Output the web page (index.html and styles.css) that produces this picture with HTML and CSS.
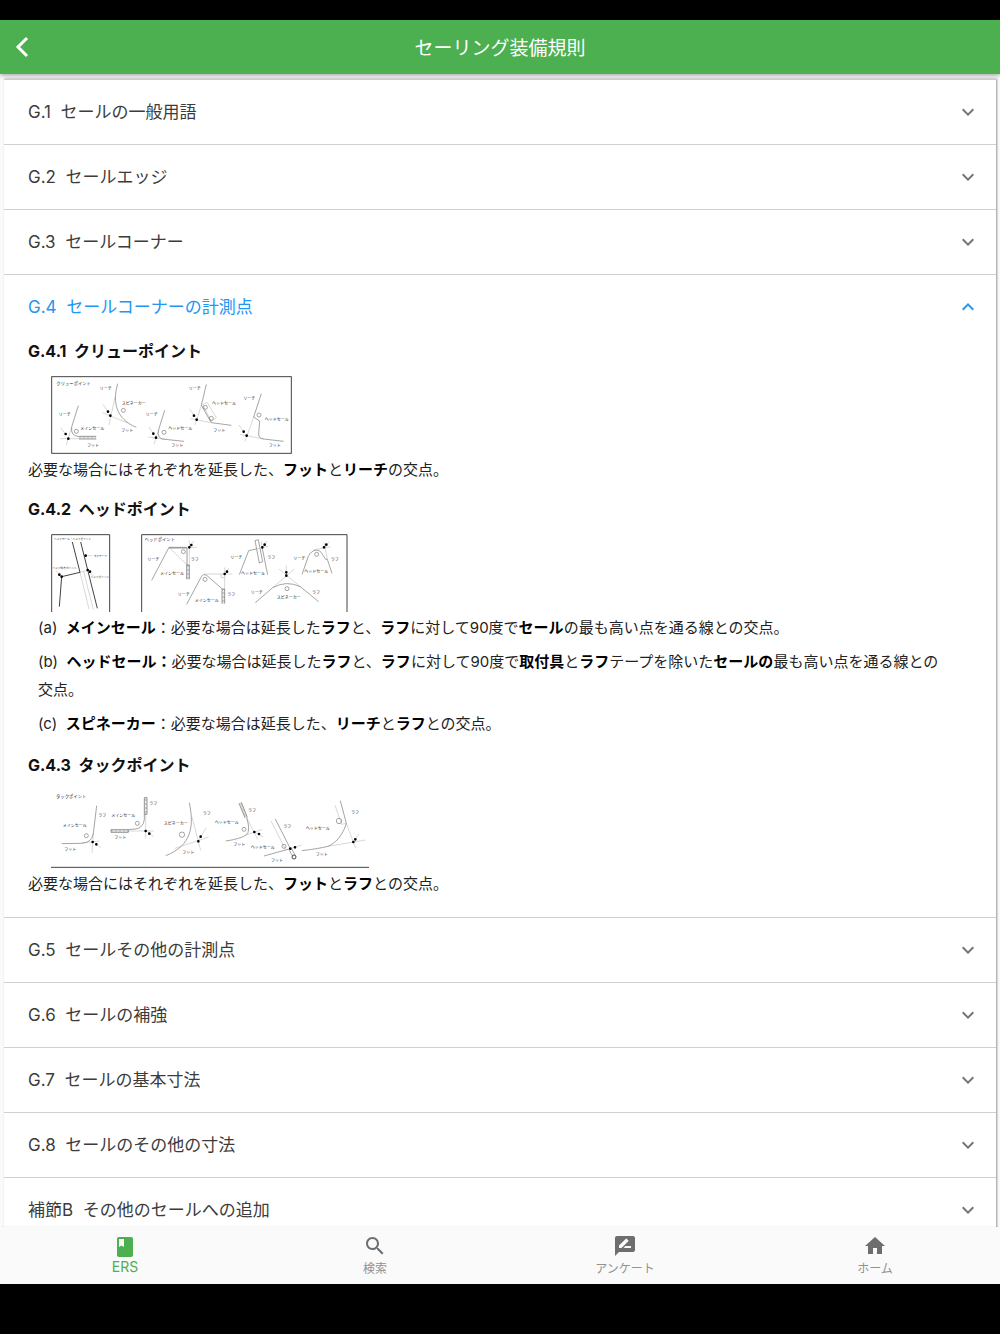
FILE: index.html
```html
<!DOCTYPE html>
<html lang="ja">
<head>
    <meta charset="UTF-8">
    <meta name="viewport" content="width=device-width, initial-scale=1.0">
    <title>セーリング装備規則</title>
    <link rel="stylesheet" href="styles.css">
</head>
<body>

    <header class="app-bar">
        <button class="back" type="button" aria-label="戻る">
            <svg width="14" height="22" viewBox="0 0 14 22"><path d="M12 2L3 11L12 20" fill="none" stroke="currentColor" stroke-width="3"/></svg>
        </button>
        <h1>セーリング装備規則</h1>
    </header>

    <main>
        <div class="accordion">
            <details>
                <summary>G.1&nbsp; セールの一般用語<svg class="chevron" viewBox="0 0 24 24"><path d="M16.59 8.59L12 13.17 7.41 8.59 6 10l6 6 6-6z"/></svg></summary>
            </details>
            <details>
                <summary>G.2&nbsp; セールエッジ<svg class="chevron" viewBox="0 0 24 24"><path d="M16.59 8.59L12 13.17 7.41 8.59 6 10l6 6 6-6z"/></svg></summary>
            </details>
            <details>
                <summary>G.3&nbsp; セールコーナー<svg class="chevron" viewBox="0 0 24 24"><path d="M16.59 8.59L12 13.17 7.41 8.59 6 10l6 6 6-6z"/></svg></summary>
            </details>
            <details open>
                <summary>G.4&nbsp; セールコーナーの計測点<svg class="chevron" viewBox="0 0 24 24"><path d="M16.59 8.59L12 13.17 7.41 8.59 6 10l6 6 6-6z"/></svg></summary>
                <div class="content">
                    <h3>G.4.1&nbsp; クリューポイント</h3>
                    <div class="figures">
                        <!-- クリューポイント -->
                        <svg class="figure" width="241" height="78" viewBox="34 17 723 234">
                            <rect class="frame" x="36" y="19" width="719" height="230"/>
                            <text class="caption" x="50" y="44">クリューポイント</text>
                            <!-- メインセール -->
                            <path d="M116 106L96 170Q92 197 118 199"/>
                            <path class="batten" d="M118 202H170"/>
                            <path class="edge" d="M118 198H170M118 206H170"/>
                            <path class="guide" d="M62 205H118M96 170L80 224M63 172L78 192"/>
                            <circle cx="110" cy="183" r="6"/>
                            <path class="dot" d="M78 191h0M86 205h0"/>
                            <text x="57" y="138">リーチ</text>
                            <text x="122" y="180">メインセール</text>
                            <text x="142" y="229">フット</text>
                            <!-- スピネーカー -->
                            <path d="M234 40C218 96 229 146 290 171"/>
                            <path class="guide" d="M226 80L208 164M188 127L264 158M190 102L205 124"/>
                            <circle cx="251" cy="120" r="6"/>
                            <path class="dot" d="M205 124h0M212 136h0"/>
                            <text x="180" y="58">リーチ</text>
                            <text x="246" y="103">スピネーカー</text>
                            <text x="245" y="185">フット</text>
                            <!-- ヘッドセール -->
                            <path d="M375 120L357 178Q350 206 376 207L433 213"/>
                            <path class="guide" d="M326 200L376 207M357 178L343 222M328 170L341 190"/>
                            <circle cx="373" cy="186" r="6"/>
                            <path class="dot" d="M341 190h0M349 202h0"/>
                            <text x="318" y="138">リーチ</text>
                            <text x="386" y="179">ヘッドセール</text>
                            <text x="395" y="229">フット</text>
                            <path d="M500 42L485 105L515 157L575 165"/>
                            <path class="guide" d="M489 103L502 96L530 142L515 153ZM485 105L466 164M452 145L515 157M450 116L463 136"/>
                            <circle cx="497" cy="111" r="6"/>
                            <circle cx="515" cy="144" r="6"/>
                            <path class="dot" d="M463 136h0M471 148h0"/>
                            <text x="447" y="58">リーチ</text>
                            <text x="517" y="104">ヘッドセール</text>
                            <text x="521" y="185">フット</text>
                            <path d="M665 70L642 140L660 152L657 190Q657 205 672 206L732 213"/>
                            <path class="guide" d="M642 140L616 214M600 192L672 206M598 164L612 184"/>
                            <circle cx="658" cy="134" r="6"/>
                            <path class="dot" d="M612 184h0M621 196h0"/>
                            <text x="611" y="89">リーチ</text>
                            <text x="675" y="151">ヘッドセール</text>
                            <text x="687" y="229">フット</text>
                        </svg>
                    </div>
                    <p>必要な場合にはそれぞれを延長した、<b>フット</b>と<b>リーチ</b>の交点。</p>

                    <h3>G.4.2&nbsp; ヘッドポイント</h3>
                    <div class="figures">
                        <!-- ヘッドセール・ヘッドポイント -->
                        <svg class="figure" width="60" height="78" viewBox="33 27 180 234">
                            <path class="frame" d="M35 261V29H209V261"/>
                            <text class="small" x="42" y="44">ヘッドセール・ヘッドポイント</text>
                            <path class="thick" d="M97 51L120 142M122 51L172 250M65 155L120 142M65 155L58 245"/>
                            <path class="guide" d="M120 142L147 252M131 140L160 254"/>
                            <path class="guide" d="M120 142L145 136M139 92H156M47 135L58 148M147 138L160 153"/>
                            <path class="dot" d="M137 92h0M58 149h0M65 155h0M143 135h0M150 140h0"/>
                            <text class="small" x="161" y="96">ラフテープ</text>
                            <text class="small" x="38" y="131">ヘッド後方ポイント</text>
                            <text class="small" x="152" y="160">ヘッドポイント</text>
                        </svg>
                        <!-- ヘッドポイント -->
                        <svg class="figure" width="207" height="78" viewBox="4 27 621 234">
                            <path class="frame" d="M6 261V29H622V261"/>
                            <text class="caption" x="15" y="48">ヘッドポイント</text>
                            <path d="M36 166L88 67H142"/>
                            <path class="edge" d="M88 69H142V120"/>
                            <path class="batten" d="M145 120V163"/>
                            <path class="edge" d="M141 120V163M149 120V163M141 120H149"/>
                            <path class="guide" d="M88 67L142 120M142 67H172M149 46V120M162 48L149 67"/>
                            <circle cx="131" cy="80" r="6"/>
                            <path class="dot" d="M149 67h0M155 60h0"/>
                            <text x="23" y="109">リーチ</text>
                            <text x="153" y="109">ラフ</text>
                            <text x="61" y="151">メインセール</text>

                            <path d="M141 238L185 155Q191 144 201 151L248 192"/>
                            <path class="batten" d="M251 193V236"/>
                            <path class="edge" d="M247 192V236M255 192V236M247 192H255"/>
                            <path class="guide" d="M193 147H278M255 127V192M268 130L255 147M244 147V158H255"/>
                            <circle cx="196" cy="163" r="6"/>
                            <path class="dot" d="M255 147h0M262 140h0"/>
                            <text x="114" y="213">リーチ</text>
                            <text x="263" y="213">ラフ</text>
                            <text x="165" y="230">メインセール</text>

                            <path d="M299 149L327 77L350 72M367 66L384 149M346 47L356 44L369 110L359 114Z"/>
                            <path class="guide" d="M350 72L386 64M365 50L367 66M382 48L370 66"/>
                            <path class="dot" d="M368 67h0M375 59h0"/>
                            <text x="272" y="102">リーチ</text>
                            <text x="383" y="102">ラフ</text>
                            <text x="304" y="151">ヘッドセール</text>

                            <path d="M347 233L399 188Q440 165 482 185L537 230"/>
                            <path class="guide" d="M399 188L464 132M482 185L418 132M440 122V152"/>
                            <circle cx="442" cy="191" r="6"/>
                            <path class="dot" d="M440 152h0M440 142h0"/>
                            <text x="333" y="208">リーチ</text>
                            <text x="517" y="208">ラフ</text>
                            <text x="411" y="222">スピネーカー</text>

                            <path d="M487 148L506 94C516 72 540 69 549 89L558 103L563 103L577 145"/>
                            <path class="guide" d="M520 75L573 65M553 52L563 103M568 50L556 66"/>
                            <circle cx="531" cy="88" r="6"/>
                            <path class="dot" d="M553 67h0M560 59h0"/>
                            <text x="461" y="104">リーチ</text>
                            <text x="573" y="109">ラフ</text>
                            <text x="494" y="144">ヘッドセール</text>
                        </svg>
                    </div>
                    <ol>
                        <li>(a)&nbsp; <b>メインセール</b>：必要な場合は延長した<b>ラフ</b>と、<b>ラフ</b>に対して90度で<b>セール</b>の最も高い点を通る線との交点。</li>
                        <li>(b)&nbsp; <b>ヘッドセール：</b>必要な場合は延長した<b>ラフ</b>と、<b>ラフ</b>に対して90度で<b>取付具</b>と<b>ラフ</b>テープを除いた<b>セールの</b>最も高い点を通る線との<br>交点。</li>
                        <li>(c)&nbsp; <b>スピネーカー</b>：必要な場合は延長した、<b>リーチ</b>と<b>ラフ</b>との交点。</li>
                    </ol>

                    <h3>G.4.3&nbsp; タックポイント</h3>
                    <div class="figures">
                        <!-- タックポイント -->
                        <svg class="figure" width="318" height="78" viewBox="18 15 954 234">
                            <path class="frame" d="M18 247H972"/>
                            <text class="caption" x="33" y="40">タックポイント</text>
                            <path d="M155 62L145 145Q141 173 109 175L50 176"/>
                            <path class="guide" d="M145 145L141 204M109 174L164 168M168 188L152 176"/>
                            <circle cx="124" cy="152" r="6"/>
                            <path class="dot" d="M143 171h0M154 178h0"/>
                            <text x="160" y="96">ラフ</text>
                            <text x="53" y="127">メインセール</text>
                            <text x="58" y="197">フット</text>

                            <path class="batten" d="M302 38V88M198 138H250"/>
                            <path class="edge" d="M298 38H306V88H298ZM198 134H250V142H198Z"/>
                            <path d="M298 88V104Q294 130 271 132L250 134"/>
                            <path class="guide" d="M302 88V160M250 138H326M326 155L308 142"/>
                            <circle cx="277" cy="115" r="6"/>
                            <path class="dot" d="M302 138h0M313 146h0"/>
                            <text x="313" y="61">ラフ</text>
                            <text x="199" y="96">メインセール</text>
                            <text x="208" y="162">フット</text>

                            <path d="M433 53C447 121 442 181 362 212"/>
                            <path class="guide" d="M441 96L467 196M390 190L491 156M484 128L460 167"/>
                            <circle cx="411" cy="149" r="8"/>
                            <path class="dot" d="M460 169h0M467 155h0"/>
                            <text x="473" y="89">ラフ</text>
                            <text x="356" y="120">スピネーカー</text>
                            <text x="412" y="206">フット</text>

                            <path class="batten" d="M586 54L604 98"/>
                            <path class="edge" d="M582 55L600 98M589 52L607 97"/>
                            <path d="M605 98Q618 140 603 150Q585 162 542 168"/>
                            <path class="guide" d="M605 98L638 163M603 150L652 133M655 156L630 142"/>
                            <circle cx="597" cy="133" r="6"/>
                            <path class="dot" d="M628 141h0M642 147h0"/>
                            <text x="609" y="81">ラフ</text>
                            <text x="509" y="116">ヘッドセール</text>
                            <text x="565" y="182">フット</text>

                            <path d="M691 102L736 191L657 213M733 196L743 214M740 192L750 210"/>
                            <path class="guide" d="M678 108L722 194M736 191L770 180"/>
                            <circle cx="717" cy="184" r="6"/>
                            <circle class="thick" cx="747" cy="216" r="6"/>
                            <path class="dot" d="M736 191h0M750 187h0"/>
                            <text x="715" y="130">ラフ</text>
                            <text x="617" y="193">ヘッドセール</text>
                            <text x="678" y="230">フット</text>

                            <path d="M886 47L904 115C895 145 876 173 849 184Q826 190 771 197"/>
                            <path class="guide" d="M904 115L932 190M849 184L962 165M870 61L890 118L904 115M942 148L926 168"/>
                            <circle cx="882" cy="108" r="8"/>
                            <path class="dot" d="M925 171h0M931 163h0"/>
                            <text x="918" y="87">ラフ</text>
                            <text x="782" y="136">ヘッドセール</text>
                            <text x="812" y="213">フット</text>
                        </svg>
                    </div>
                    <p>必要な場合にはそれぞれを延長した、<b>フット</b>と<b>ラフ</b>との交点。</p>
                </div>
            </details>
            <details>
                <summary>G.5&nbsp; セールその他の計測点<svg class="chevron" viewBox="0 0 24 24"><path d="M16.59 8.59L12 13.17 7.41 8.59 6 10l6 6 6-6z"/></svg></summary>
            </details>
            <details>
                <summary>G.6&nbsp; セールの補強<svg class="chevron" viewBox="0 0 24 24"><path d="M16.59 8.59L12 13.17 7.41 8.59 6 10l6 6 6-6z"/></svg></summary>
            </details>
            <details>
                <summary>G.7&nbsp; セールの基本寸法<svg class="chevron" viewBox="0 0 24 24"><path d="M16.59 8.59L12 13.17 7.41 8.59 6 10l6 6 6-6z"/></svg></summary>
            </details>
            <details>
                <summary>G.8&nbsp; セールのその他の寸法<svg class="chevron" viewBox="0 0 24 24"><path d="M16.59 8.59L12 13.17 7.41 8.59 6 10l6 6 6-6z"/></svg></summary>
            </details>
            <details>
                <summary>補節B&nbsp; その他のセールへの追加<svg class="chevron" viewBox="0 0 24 24"><path d="M16.59 8.59L12 13.17 7.41 8.59 6 10l6 6 6-6z"/></svg></summary>
            </details>
        </div>
    </main>

    <nav class="tabs">
        <a class="active" href="#ers">
            <svg viewBox="0 0 24 24"><path d="M18 2H6c-1.1 0-2 .9-2 2v16c0 1.1.9 2 2 2h12c1.1 0 2-.9 2-2V4c0-1.1-.9-2-2-2zM6 4h5v8l-2.5-1.5L6 12V4z"/></svg>
            <span>ERS</span>
        </a>
        <a href="#search">
            <svg viewBox="0 0 24 24"><path d="M15.5 14h-.79l-.28-.27C15.41 12.59 16 11.11 16 9.5 16 5.91 13.09 3 9.5 3S3 5.91 3 9.5 5.91 16 9.5 16c1.61 0 3.09-.59 4.23-1.57l.27.28v.79l5 4.99L20.49 19l-4.99-5zm-6 0C7.01 14 5 11.99 5 9.5S7.01 5 9.5 5 14 7.01 14 9.5 11.99 14 9.5 14z"/></svg>
            <span>検索</span>
        </a>
        <a href="#enquete">
            <svg viewBox="0 0 24 24"><path d="M20 2H4c-1.1 0-1.99.9-1.99 2L2 22l4-4h14c1.1 0 2-.9 2-2V4c0-1.1-.9-2-2-2zM6 14v-2.47l6.88-6.88c.2-.2.51-.2.71 0l1.77 1.77c.2.2.2.51 0 .71L8.47 14H6zm12 0h-7.5l2-2H18v2z"/></svg>
            <span>アンケート</span>
        </a>
        <a href="#home">
            <svg viewBox="0 0 24 24"><path d="M10 20v-6h4v6h5v-8h3L12 3 2 12h3v8z"/></svg>
            <span>ホーム</span>
        </a>
    </nav>

</body>
</html>
```
FILE: styles.css
```css
* {
    box-sizing: border-box;
}
body {
    display: flex;
    flex-direction: column;
    height: 100vh;
    margin: 0;
    padding: 20px 0 50px; /* 上下の黒帯 */
    overflow: hidden;
    background-color: #000;
    color: #222;
    font-family: Inter, "Noto Sans CJK JP", sans-serif;
    font-size: 15px;
}
.app-bar {
    display: grid;
    grid-template-columns: 44px 1fr 44px;
    align-items: center;
    flex: none;
    height: 54px;
    background-color: #4caf50;
    color: #fff;
    box-shadow: 0 1px 5px rgba(0,0,0,0.4);
    z-index: 1;
}
.app-bar h1 {
    margin: 0;
    padding-bottom: 2px;
    font-size: 19px;
    font-weight: 400;
    text-align: center;
}
.back {
    display: flex;
    justify-content: center;
    padding: 0;
    border: none;
    background: none;
    color: #fff;
    cursor: pointer;
}
main {
    flex: 1;
    min-height: 0;
    padding: 5px 4px 0;
    overflow: hidden;
    background-color: #fafafa;
}
.accordion {
    background-color: #fff;
    box-shadow: 1px 0 2px rgba(0,0,0,0.4);
}
details {
    border-top: 1px solid #d0d0d0;
}
summary {
    display: flex;
    align-items: center;
    justify-content: space-between;
    height: 64px;
    padding: 0 16px 3px 24px;
    color: #3c3c3c;
    font-size: 17px;
    list-style: none;
    cursor: pointer;
}
summary::-webkit-details-marker {
    display: none;
}
.chevron {
    flex: none;
    width: 24px;
    height: 24px;
    margin-top: 3px;
    fill: #757575;
}
details[open] summary {
    color: #2196f3;
}
details[open] .chevron {
    fill: #2196f3;
    transform: rotate(180deg);
}
.content {
    padding: 0 20px 19px 24px;
}
h3 {
    margin: 13px 0 0;
    color: #111;
    font-size: 16px;
    line-height: 24px;
}
h3:first-child {
    margin-top: 0;
}
p {
    margin: 0;
    line-height: 28px;
}
b {
    color: #000;
}
ol {
    display: grid;
    gap: 6px;
    margin: 0;
    padding: 0 0 2px 10px;
    line-height: 28px;
    list-style: none;
}

/* 図 */
.figures {
    display: flex;
    gap: 30px;
    margin: 13px 0 2px;
    padding-left: 23px;
}
.figure {
    flex: none;
    fill: none;
    stroke: #777;
    stroke-width: 2;
}
.figure text {
    fill: #222;
    stroke: none;
    font-size: 12px;
}
.figure .caption {
    font-size: 13px;
}
.figure .small {
    font-size: 8px;
}
.figure .frame {
    stroke: #444;
    stroke-width: 3;
}
.figure .edge {
    stroke: #666;
}
.figure .thick {
    stroke: #444;
    stroke-width: 3;
}
.figure .batten {
    stroke: #bbb;
    stroke-width: 7;
    stroke-dasharray: 2 2;
}
.figure .guide {
    stroke: #888;
    stroke-width: 1;
}
.figure .dot {
    stroke: #000;
    stroke-width: 8;
    stroke-linecap: round;
}

/* 下部タブ */
.tabs {
    display: grid;
    grid-template-columns: repeat(4, 1fr);
    flex: none;
    height: 57px;
    background-color: #fafafa;
    box-shadow: 0 0 2px rgba(0,0,0,0.1);
    z-index: 1;
}
.tabs a {
    display: flex;
    flex-direction: column;
    align-items: center;
    gap: 3px;
    padding-top: 7px;
    color: #929292;
    font-size: 12px;
    line-height: 16px;
    text-decoration: none;
}
.tabs svg {
    width: 24px;
    height: 24px;
    fill: #6e6e6e;
}
.tabs .active {
    gap: 0;
    padding-top: 8px;
    color: #4caf50;
    font-size: 14px;
}
.tabs .active svg {
    fill: #4caf50;
}
```
